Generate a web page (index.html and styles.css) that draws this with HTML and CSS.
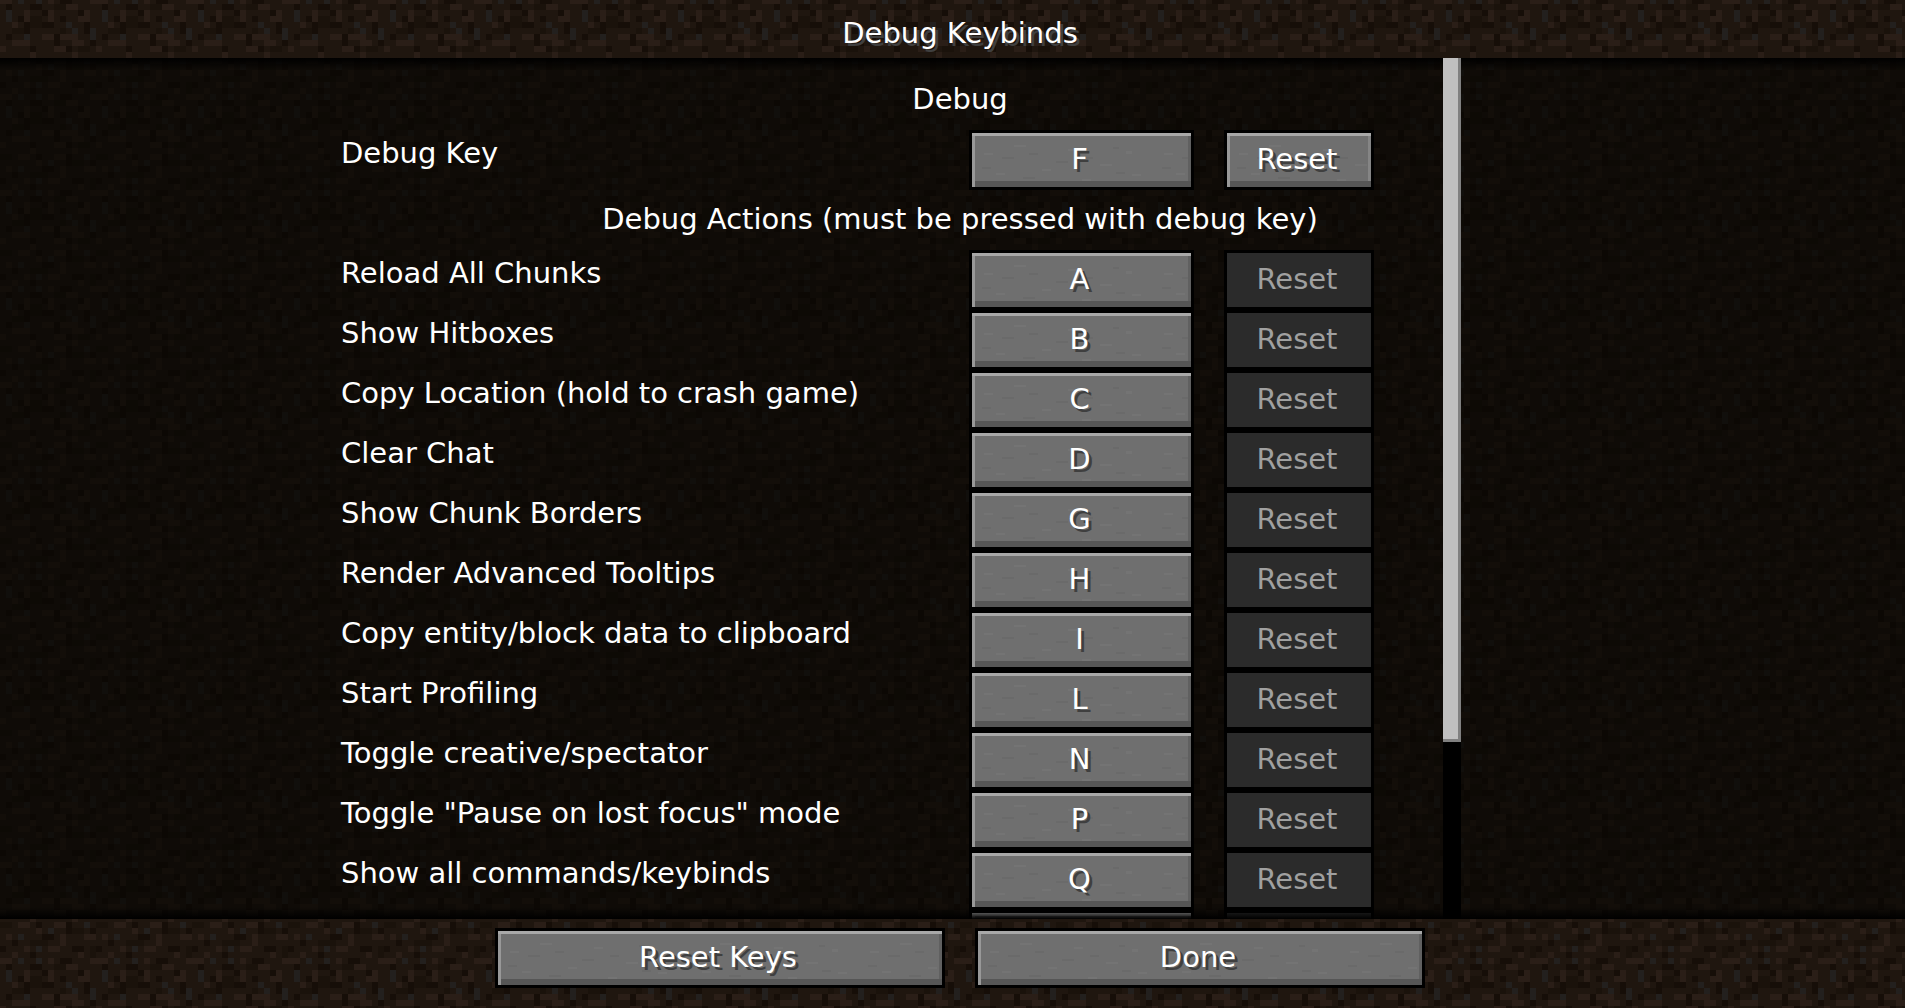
FILE: index.html
```
<!DOCTYPE html>
<html lang="en">
<head>
    <meta charset="UTF-8">
    <meta name="viewport" content="width=device-width, initial-scale=1.0">
    <title>Debug Keybinds</title>
    <link rel="stylesheet" href="styles.css">
</head>
<body>
    <header class="top-bar">
        <h1>Debug Keybinds</h1>
    </header>

    <main class="list-area">
        <div class="list">
            <h2>Debug</h2>
            <div class="row">
                <label for="key-debug">Debug Key</label>
                <button id="key-debug" class="btn">F</button>
                <button class="btn reset">Reset</button>
            </div>

            <h2>Debug Actions (must be pressed with debug key)</h2>
            <div class="row">
                <label for="key-chunks">Reload All Chunks</label>
                <button id="key-chunks" class="btn">A</button>
                <button class="btn reset" disabled>Reset</button>
            </div>
            <div class="row">
                <label for="key-hitboxes">Show Hitboxes</label>
                <button id="key-hitboxes" class="btn">B</button>
                <button class="btn reset" disabled>Reset</button>
            </div>
            <div class="row">
                <label for="key-location">Copy Location (hold to crash game)</label>
                <button id="key-location" class="btn">C</button>
                <button class="btn reset" disabled>Reset</button>
            </div>
            <div class="row">
                <label for="key-chat">Clear Chat</label>
                <button id="key-chat" class="btn">D</button>
                <button class="btn reset" disabled>Reset</button>
            </div>
            <div class="row">
                <label for="key-borders">Show Chunk Borders</label>
                <button id="key-borders" class="btn">G</button>
                <button class="btn reset" disabled>Reset</button>
            </div>
            <div class="row">
                <label for="key-tooltips">Render Advanced Tooltips</label>
                <button id="key-tooltips" class="btn">H</button>
                <button class="btn reset" disabled>Reset</button>
            </div>
            <div class="row">
                <label for="key-data">Copy entity/block data to clipboard</label>
                <button id="key-data" class="btn">I</button>
                <button class="btn reset" disabled>Reset</button>
            </div>
            <div class="row">
                <label for="key-profiling">Start Profiling</label>
                <button id="key-profiling" class="btn">L</button>
                <button class="btn reset" disabled>Reset</button>
            </div>
            <div class="row">
                <label for="key-gamemode">Toggle creative/spectator</label>
                <button id="key-gamemode" class="btn">N</button>
                <button class="btn reset" disabled>Reset</button>
            </div>
            <div class="row">
                <label for="key-pause">Toggle "Pause on lost focus" mode</label>
                <button id="key-pause" class="btn">P</button>
                <button class="btn reset" disabled>Reset</button>
            </div>
            <div class="row">
                <label for="key-commands">Show all commands/keybinds</label>
                <button id="key-commands" class="btn">Q</button>
                <button class="btn reset" disabled>Reset</button>
            </div>
            <!-- cut off by the bottom bar -->
            <div class="row">
                <span></span>
                <button class="btn"></button>
                <button class="btn reset" disabled></button>
            </div>

            <div class="scrollbar"><div class="thumb"></div></div>
        </div>
    </main>

    <footer class="bottom-bar">
        <button class="btn">Reset Keys</button>
        <button class="btn">Done</button>
    </footer>
</body>
</html>
```
FILE: styles.css
```
:root {
    /* 16x16 dirt tile */
    --dirt: url("data:image/svg+xml,%3Csvg xmlns='http://www.w3.org/2000/svg' viewBox='0 0 16 16' shape-rendering='crispEdges'%3E%3Crect width='16' height='16' fill='%231f160f'/%3E%3Cpath fill='%232a1e17' d='M0 0h2v1H0zM4 2h1v2H4zM8 2h1v2H8zM13 3h1v1h-1zM14 2h1v2h-1zM2 4h1v1H2zM10 6h3v1h-3zM7 6h2v1H7zM2 7h3v1H2zM12 7h2v1h-2zM0 8h1v1H0zM9 8h2v1H9zM12 9h1v1h-1zM3 10h2v1H3zM9 10h2v1H9zM6 11h1v1H6zM14 12h2v1h-2zM1 12h1v1H1zM10 12h1v2h-1zM4 14h1v1H4zM8 14h2v1H8zM13 15h1v2h-1zM2 15h1v1H2zM8 0h1v1H8zM5 9h1v1H5zM15 0h1v1h-1zM11 1h2v1h-2z'/%3E%3Cpath fill='%23160e08' d='M1 1h1v1H1zM3 3h1v1H3zM4 4h1v2H4zM10 3h1v1h-1zM14 4h1v2h-1zM9 6h1v2H9zM15 7h1v1h-1zM7 4h2v1H7zM5 1h2v1H5zM11 0h1v1h-1zM13 2h1v1h-1zM6 10h1v1H6zM11 10h1v2h-1zM2 13h1v1H2zM7 12h2v1H7zM12 14h2v1h-2zM5 8h1v1H5zM0 14h1v1H0zM5 15h1v1H5zM10 0h1v1h-1zM1 6h1v1H1zM15 11h1v1h-1zM7 2h1v1H7zM11 8h1v1h-1z'/%3E%3Cpath fill='%2323201e' d='M1 2h1v2H1zM11 4h1v1h-1zM4 6h1v1H4zM6 0h1v1H6zM15 5h1v2h-1zM14 10h1v1h-1zM6 14h1v1H6zM8 11h1v1H8zM3 12h1v1H3zM12 5h1v1h-1zM3 0h1v1H3z'/%3E%3Cpath fill='%231a120b' d='M5 3h2v2H5zM10 5h1v1h-1zM0 10h2v1H0zM12 11h2v1h-2zM5 13h3v1H5zM13 8h2v1h-2zM2 5h2v1H2zM9 1h2v1H9zM15 14h1v2h-1z'/%3E%3C/svg%3E");
    --stone: url("data:image/svg+xml,%3Csvg xmlns='http://www.w3.org/2000/svg' viewBox='0 0 180 60'%3E%3Cpath fill='%23747474' d='M12 20h9v2h-9zM42 12h12v2H42zM70 36h9v2h-9zM96 16h9v2h-9zM128 31h12v2h-12zM154 18h6v3h-6zM24 40h9v2h-9zM110 46h9v2h-9zM160 41h9v2h-9z'/%3E%3Cpath fill='%236a6a6a' d='M30 24h12v2H30zM57 20h9v2h-9zM10 34h9v2h-9zM84 28h12v2H84zM112 24h9v2h-9zM141 14h6v2h-6zM144 39h9v2h-9zM51 44h12v2H51zM88 48h6v2h-6z'/%3E%3C/svg%3E");
}

* {
    box-sizing: border-box;
}

body {
    margin: 0;
    height: 100vh;
    display: flex;
    flex-direction: column;
    font-family: "DejaVu Sans", sans-serif;
    font-size: 29px;
    color: white;
    background: #1f160f var(--dirt) 0 -2px / 96px 96px;
    overflow: hidden;
}

h1,
h2 {
    margin: 0;
    font-size: 29px;
    font-weight: normal;
    text-align: center;
}

.top-bar {
    height: 58px;
    padding: 4px 0 0 15px;
}

h1 {
    line-height: 58px;
    text-shadow: 3px 3px #3f3f3f;
}

.list-area {
    flex: 1;
    min-height: 0;
    position: relative;
    padding-left: 15px;
    overflow: hidden;
    background-color: rgba(8, 6, 3, 0.66);
}

/* shadows cast on the list by the two bars */
.list-area::before,
.list-area::after {
    content: "";
    position: absolute;
    left: 0;
    right: 0;
    height: 12px;
}

.list-area::before {
    top: 0;
    background: linear-gradient(black, transparent);
}

.list-area::after {
    bottom: 0;
    background: linear-gradient(transparent, black);
}

.list {
    position: relative;
    max-width: 1238px;
    height: 100%;
    margin: 0 auto;
    padding-top: 12px;
}

h2 {
    line-height: 58px;
    height: 60px;
}

.row {
    display: grid;
    grid-template-columns: 1fr 225px 150px;
    column-gap: 30px;
    height: 60px;
    padding-right: 205px;
}

.row label {
    line-height: 46px;
    white-space: nowrap;
}

.btn {
    height: 60px;
    padding: 0 4px 3px 0;
    border: 3px solid black;
    font: inherit;
    color: white;
    text-shadow: 3px 3px #3f3f3f;
    background: #6f6f6f var(--stone) 0 0 / 180px 60px;
    box-shadow: inset 0 3px #a8a8a8, inset 3px 0 #989898, inset 0 -6px #565656, inset -3px 0 #606060;
    cursor: pointer;
}

.reset {
    box-shadow: inset 0 3px #a8a8a8, inset 3px 0 #989898, inset 0 -6px #565656, inset -3px 0 #858585;
}

.btn:disabled {
    color: #a0a0a0;
    text-shadow: none;
    background: #2b2b2b;
    box-shadow: none;
    cursor: default;
}

.scrollbar {
    position: absolute;
    top: 0;
    bottom: 0;
    right: 118px;
    width: 18px;
    background: black;
}

.thumb {
    height: 79.5%;
    background: #c0c0c0;
    border: solid #808080;
    border-width: 0 3px 3px 0;
}

.bottom-bar {
    display: flex;
    justify-content: center;
    gap: 30px;
    padding: 9px 0 20px 15px;
}

.bottom-bar .btn {
    width: 450px;
}
```
